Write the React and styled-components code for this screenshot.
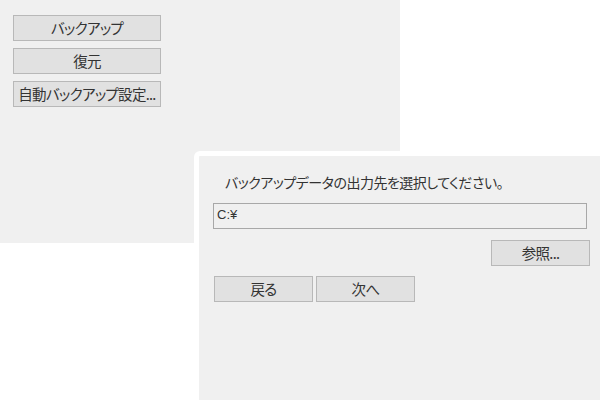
import React from 'react'
import styled, { createGlobalStyle } from 'styled-components'

const GlobalStyle = createGlobalStyle`
  html, body {
    margin: 0;
    padding: 0;
    background: #ffffff;
  }
  body {
    font-family: "Noto Sans CJK JP", "Noto Sans", sans-serif;
    color: #333333;
  }
`

const Desktop = styled.div`
  position: relative;
  width: 600px;
  height: 400px;
  overflow: hidden;
  background: #ffffff;
`

const MenuWindow = styled.div`
  width: 400px;
  height: 243px;
  box-sizing: border-box;
  background: #f0f0f0;
  padding: 15px 13px;
  display: flex;
  flex-direction: column;
  gap: 7px;
`

const Button = styled.button`
  box-sizing: border-box;
  width: ${p => p.$width || 99}px;
  height: 26px;
  padding: 0;
  background: #e1e1e1;
  border: 1px solid #b8b8b8;
  font-family: inherit;
  font-size: 14.5px;
  font-feature-settings: 'palt';
  letter-spacing: -0.7px;
  color: #333333;
  display: flex;
  align-items: center;
  justify-content: center;
  white-space: nowrap;
  line-height: 1;
`

const DialogWindow = styled.div`
  position: absolute;
  left: 194px;
  top: 151px;
  width: 406px;
  height: 249px;
  box-sizing: border-box;
  border-top: 5px solid #ffffff;
  border-left: 5px solid #ffffff;
  border-top-left-radius: 6px;
  background: #f0f0f0;
  padding: 16px 10px 0 14px;
  display: flex;
  flex-direction: column;
`

const Prompt = styled.div`
  margin-left: 12px;
  height: 20px;
  line-height: 20px;
  font-size: 14px;
  font-feature-settings: 'palt';
  letter-spacing: -0.5px;
`

const PathField = styled.div`
  box-sizing: border-box;
  margin-top: 11px;
  width: 374px;
  height: 26px;
  border: 1px solid #a8a8a8;
  background: #f0f0f0;
  padding: 0 3px;
  font-family: "Liberation Sans", "Noto Sans CJK JP", sans-serif;
  font-size: 13px;
  line-height: 22px;
`

const BrowseRow = styled.div`
  margin-top: 11px;
  display: flex;
  justify-content: flex-end;
`

const NavRow = styled.div`
  margin-top: 10px;
  display: flex;
  gap: 3px;
  padding-left: 1px;
`

export default function App() {
  return (
    <Desktop>
      <GlobalStyle />
      <MenuWindow>
        <Button $width={148}>バックアップ</Button>
        <Button $width={148}>復元</Button>
        <Button $width={148}>自動バックアップ設定...</Button>
      </MenuWindow>
      <DialogWindow>
        <Prompt>バックアップデータの出力先を選択してください。</Prompt>
        <PathField>C:¥</PathField>
        <BrowseRow>
          <Button>参照...</Button>
        </BrowseRow>
        <NavRow>
          <Button>戻る</Button>
          <Button>次へ</Button>
        </NavRow>
      </DialogWindow>
    </Desktop>
  )
}
